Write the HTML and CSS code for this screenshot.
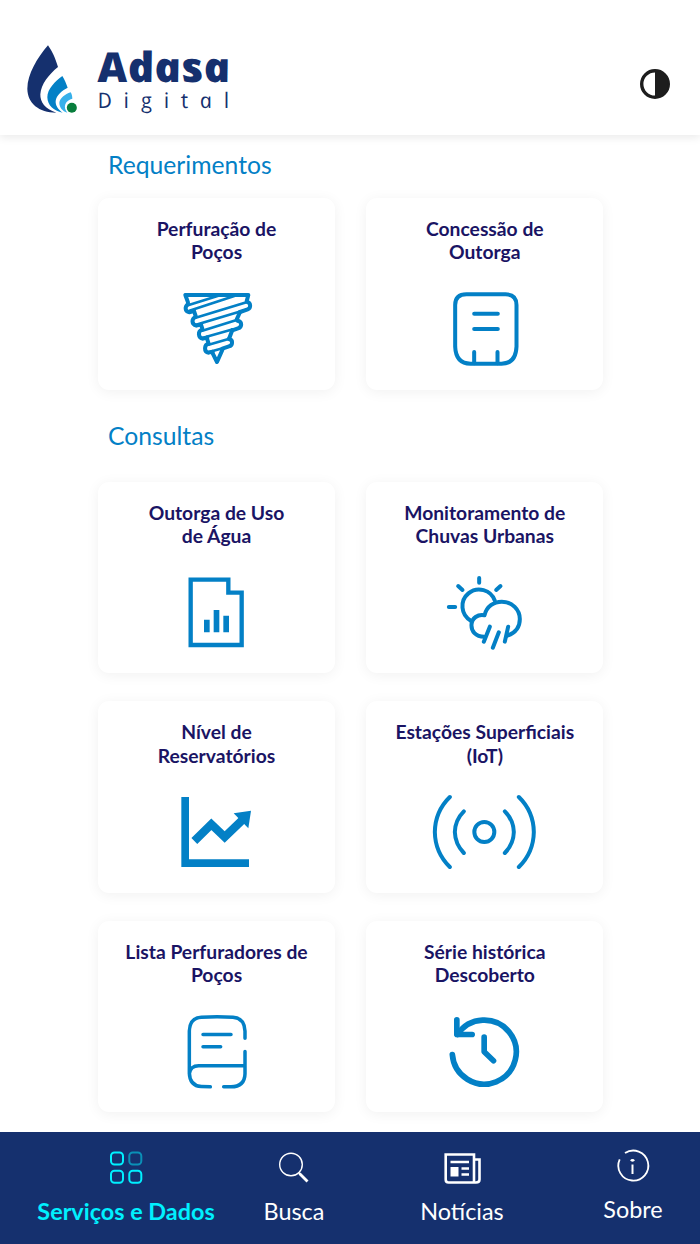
FILE: index.html
```html
<!DOCTYPE html>
<html lang="pt-BR">
<head>
    <meta charset="UTF-8">
    <meta name="viewport" content="width=device-width, initial-scale=1.0">
    <title>Adasa Digital</title>
    <link rel="stylesheet" href="styles.css">
</head>
<body>
    <header class="topo">
        <svg class="logo" viewBox="72 9 654 246" role="img" aria-label="Adasa Digital">
            <path fill="#15306e" d="M144 46 C112 83 82 133 82 176 C83 220 116 247 169 248 C135 237 120 216 121 193 C123 162 147 133 174 111 C166 84 157 65 144 46Z"/>
            <path fill="#0380c6" d="M187 138 C166 154 142 176 142 202 C143 226 160 243 188 248 C174 238 166 226 167 213 C169 196 185 182 203 173 C198 159 194 149 187 138Z"/>
            <path fill="#37b0ea" d="M212 187 C195 193 179 205 178 218 C178 232 187 243 202 248 C195 240 193 231 196 223 C199 213 208 209 217 206 C217 198 215 192 212 187Z"/>
            <circle cx="215.500" cy="233.500" r="15" fill="#087d3c"/>
            <text class="logo-nome" transform="translate(300 156) skewX(12)" textLength="399" lengthAdjust="spacingAndGlyphs">Adasa</text>
            <text class="logo-sub" transform="translate(296 234) skewX(12)" textLength="395">Digital</text>
        </svg>
        <!-- Alto contraste -->
        <svg class="contraste" viewBox="0 0 30 30">
            <circle cx="15" cy="15" r="13.300" fill="none" stroke="#1d1d1d" stroke-width="3.400"/>
            <path d="M15 2a13 13 0 0 1 0 26z" fill="#1d1d1d"/>
        </svg>
    </header>

    <main>
        <h2>Requerimentos</h2>
        <section class="cards">
            <a class="card">
                <h3>Perfuração de<br>Poços</h3>
                <svg class="icone" viewBox="201 285 360 270" stroke-width="12">
                    <path d="M286 315H475L470 334M286 315l8 22M312 363l5 15M333 404l4 12M350 443l5 15M367 488l14 28 16-36M450 366l-10 23M427 420l-9 24"/>
                    <path d="M294 342c-10 8-10 23 4 25l8-2M472 336c10 2 12 18 1 22l-23 8M450 365"/>
                    <path d="M317 381c-13 5-13 22 2 26l14-3M442 392c15 2 15 19 2 23l-17 6"/>
                    <path d="M337 419c-15 4-13 25 2 27l13-3M416 447c15 2 12 20 1 22l-20 7"/>
                    <path d="M356 461c-14 2-15 25 0 27l12-3"/>
                    <path stroke-width="8" d="M294 346L385 317M298 362L433 318M317 383L472 336M318 404L448 365M337 422L440 390M339 443L429 418M356 464L418 446M357 486L398 475"/>
                </svg>
            </a>
            <a class="card">
                <h3>Concessão de<br>Outorga</h3>
                <svg class="icone" viewBox="195.500 285 360 270" stroke-width="12">
                    <path d="M320 313H437Q470 313 470 345V470Q468 521 425 521H332Q288 521 286 470V345Q286 313 320 313Z"/>
                    <path d="M343 371h71M343 417h71M343 486v34M413 486v34"/>
                </svg>
            </a>
        </section>

        <h2 class="consultas">Consultas</h2>
        <section class="cards">
            <a class="card">
                <h3>Outorga de Uso<br>de Água</h3>
                <svg class="icone reto" viewBox="201 282 360 270" stroke-width="13">
                    <path d="M302 314H415V353H455V510H302Z"/>
                    <path stroke-width="17" d="M350.500 434v38M379.500 405v67M408.500 422v50"/>
                </svg>
            </a>
            <a class="card">
                <h3>Monitoramento de<br>Chuvas Urbanas</h3>
                <svg class="icone" viewBox="195.500 282 360 270" stroke-width="12">
                    <path d="M358 309v14M295 333l13 12M422 333l-13 12M267 396h19"/>
                    <path d="M333 437A50 50 0 1 1 405 377"/>
                    <path d="M373 485C347 485 334 468 335 449C336 429 354 417 374 421C380 394 402 380 426 380C457 380 480 404 480 432C480 457 465 474 443 482"/>
                    <path d="M390 455L372 500M417 472L399 518M445 455L435 500"/>
                </svg>
            </a>
            <a class="card">
                <h3>Nível de<br>Reservatórios</h3>
                <svg class="icone reto" viewBox="201 280 360 270">
                    <path stroke-width="23" d="M285.500 307V505.500H477"/>
                    <path stroke-width="25" d="M313 439L364 389L404 427L461 372"/>
                    <path class="cheio" d="M431 356L483 348L475 401Z"/>
                </svg>
            </a>
            <a class="card">
                <h3>Estações Superficiais<br>(IoT)</h3>
                <svg class="icone" viewBox="195.500 280 360 270" stroke-width="12">
                    <circle cx="373.500" cy="412" r="30"/>
                    <path d="M312 350Q286 376 285 412Q286 448 312 475M435 350Q461 376 462 412Q461 448 435 475M270 307Q226 350 225 412Q226 474 270 517M477 307Q521 350 522 412Q521 474 477 517"/>
                </svg>
            </a>
            <a class="card">
                <h3>Lista Perfuradores de<br>Poços</h3>
                <svg class="icone" viewBox="201 280.500 360 270" stroke-width="10.500">
                    <path d="M465 371V350Q464 311 429 308Q381 306 334 308Q299 310 298 350V475Q299 514 334 516L361 517M401 517H423Q464 516 465 478V411M298 478C300 463 309 454 326 454H465"/>
                    <path d="M339 360h84M339 397h53"/>
                </svg>
            </a>
            <a class="card">
                <h3>Série histórica<br>Descoberto</h3>
                <svg class="icone" viewBox="195.500 280.500 360 270" stroke-width="17">
                    <path d="M277.500 420A96 96 0 1 0 293 360"/>
                    <path d="M291 316V360H337M373 368V412L401 439"/>
                </svg>
            </a>
        </section>
    </main>

    <nav class="menu">
        <a class="item ativo">
            <svg viewBox="0 0 40 40" stroke-width="2">
                <rect x="5" y="4.500" width="12" height="12" rx="3.500"/>
                <rect x="23.300" y="4.500" width="12" height="12" rx="3.500" opacity=".5"/>
                <rect x="5" y="22.700" width="12" height="12" rx="3.500"/>
                <rect x="23.300" y="22.700" width="12" height="12" rx="3.500"/>
            </svg>
            <span>Serviços e Dados</span>
        </a>
        <a class="item">
            <svg viewBox="0 0 40 40">
                <circle cx="17" cy="16.500" r="11.300" stroke-width="1.400"/>
                <path stroke-width="1.400" d="M24.500 24.500l2 2"/>
                <path stroke-width="2.800" d="M25.500 25.500l8 8"/>
            </svg>
            <span>Busca</span>
        </a>
        <a class="item">
            <svg viewBox="0 0 40 40" stroke-width="2.600">
                <path d="M32 34.500H6.500Q3.700 34.500 3.700 31.500V6.500H32V34.500H34Q37.500 34.500 37.500 31.500V11.500H33"/>
                <path d="M8.500 14h18.500M19.500 20.500h7.500M19.500 26.500h7.500"/>
                <path class="cheio" d="M8.500 19h8v9.500h-8z"/>
            </svg>
            <span>Notícias</span>
        </a>
        <a class="item sobre">
            <svg viewBox="0.500 -1 40 40" stroke-width="1.800">
                <path d="M12.500 6.100A15 15 0 1 1 7.200 12.300"/>
                <path stroke-width="2" d="M20 17.500v9.500"/>
                <ellipse class="cheio" cx="20" cy="13.300" rx="2" ry="1.400"/>
            </svg>
            <span>Sobre</span>
        </a>
    </nav>
</body>
</html>
```
FILE: styles.css
```css
body {
    font-family: Lato, 'Liberation Sans', sans-serif;
    display: flex;
    flex-direction: column;
    height: 1244px;
    margin: 0;
    background-color: #fff;
    overflow: hidden;
}
.topo {
    display: flex;
    justify-content: space-between;
    align-items: flex-start;
    box-sizing: border-box;
    height: 135px;
    padding: 33px 30.5px 0 24px;
    box-shadow: 0 3px 8px rgba(0, 0, 0, 0.08);
}
.logo {
    width: 218px;
    height: 82px;
    overflow: visible;
}
.logo text {
    font-family: 'Open Sans', sans-serif;
    font-style: italic;
    fill: #15306e;
}
.logo-nome {
    font-size: 124px;
    font-weight: 800;
}
.logo-sub {
    font-size: 64px;
}
.contraste {
    width: 30px;
    height: 30px;
    margin-top: 36px;
}
main {
    flex: 1;
    padding: 0 96px 0 98px;
}
h2 {
    margin: 15px 0 18px 10px;
    font-size: 24.7px;
    font-weight: 400;
    line-height: 30px;
    color: #0380c6;
}
h2.consultas {
    margin: 31px 0 31.3px 10px;
}
.cards {
    display: grid;
    grid-template-columns: 237px 237px;
    column-gap: 31.3px;
    row-gap: 28px;
}
.card {
    display: flex;
    flex-direction: column;
    align-items: center;
    box-sizing: border-box;
    height: 191.5px;
    padding-top: 19px;
    border-radius: 11px;
    background: #fff;
    box-shadow: 0 2px 14px rgba(0, 0, 0, 0.06);
}
.card h3 {
    margin: 0 0 21.6px;
    font-size: 19.3px;
    font-weight: 700;
    line-height: 23.2px;
    text-align: center;
    white-space: nowrap;
    color: #1a1464;
}
.icone {
    width: 120px;
    height: 90px;
    fill: none;
    stroke: #0380c6;
    stroke-linecap: round;
    stroke-linejoin: round;
}
.reto {
    stroke-linecap: butt;
    stroke-linejoin: miter;
}
.icone .cheio {
    fill: #0380c6;
    stroke: none;
}
.menu {
    display: grid;
    grid-template-columns: 168px 168px 168px 174px;
    box-sizing: border-box;
    height: 112px;
    padding: 16px 0 0 42px;
    background: #15306e;
    position: relative;
}
.item {
    display: flex;
    flex-direction: column;
    align-items: center;
    gap: 8px;
    font-size: 23.4px;
    line-height: 30px;
    white-space: nowrap;
    color: #fff;
}
.item svg {
    width: 40px;
    height: 40px;
    fill: none;
    stroke: currentColor;
}
.item .cheio {
    fill: currentColor;
    stroke: none;
}
.ativo {
    font-weight: 700;
    color: #00f0ff;
}
.sobre {
    margin-top: -2px;
}
```
